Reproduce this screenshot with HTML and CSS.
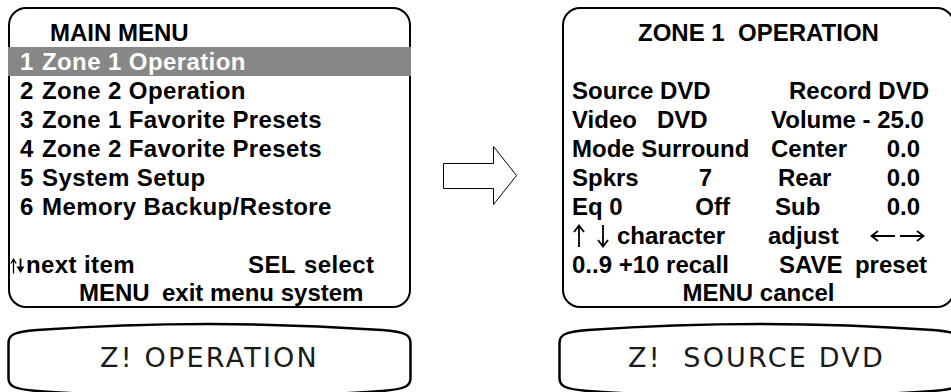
FILE: index.html
```html
<!DOCTYPE html>
<html lang="en">
<head>
<meta charset="UTF-8">
<meta name="viewport" content="width=device-width, initial-scale=1.0">
<title>Main Menu / Zone 1 Operation</title>
<link rel="stylesheet" href="styles.css">
</head>
<body>

<div class="stage">

    <section class="col col-left">
        <div class="panel panel-menu">
            <div class="title-menu">MAIN MENU</div>
            <div class="item sel"><span class="num">1</span>Zone 1 Operation</div>
            <div class="item"><span class="num">2</span>Zone 2 Operation</div>
            <div class="item"><span class="num">3</span>Zone 1 Favorite Presets</div>
            <div class="item"><span class="num">4</span>Zone 2 Favorite Presets</div>
            <div class="item"><span class="num">5</span>System Setup</div>
            <div class="item"><span class="num">6</span>Memory Backup/Restore</div>
            <div class="blank"></div>
            <div class="foot-nav">
                <span class="nav">
                    <svg class="updown" width="15" height="16" viewBox="0 0 15 16">
                        <path d="M3.5 15.5V2M0.8 5.5L3.5 1.2L6.2 5.5" fill="none" stroke="#000" stroke-width="1.3"/>
                        <path d="M10.5 0.5V10" stroke="#000" stroke-width="1.8"/>
                        <path d="M6.5 8.5H14.5L10.5 15Z" fill="#000"/>
                    </svg>next item</span>
                <span>SEL</span>
                <span>select</span>
            </div>
            <div class="foot-exit"><span class="key">MENU</span>exit menu system</div>
        </div>
        <div class="oval">
            <svg class="oval-shape" width="405" height="80" viewBox="0 0 405 80">
                <path d="M1.5 21C1.5 13 6 10 30 8Q202.5 -4 375 8C399 10 403.5 13 403.5 21L403.5 56C403.5 64 399 67 375 69Q202.5 81 30 69C6 67 1.5 64 1.5 56Z" fill="none" stroke="#000" stroke-width="2.5"/>
            </svg>
            <span class="oval-text">Z! OPERATION</span>
        </div>
    </section>

    <div class="pointer">
        <svg width="76" height="62" viewBox="0 0 76 62">
            <path d="M0.5 17.5H50.5V0.5L73.5 29.5L50.5 58.5V42.5H0.5Z" fill="#fff" stroke="#000" stroke-width="1"/>
        </svg>
    </div>

    <section class="col col-right">
        <div class="panel panel-zone">
            <div class="title-zone pre">ZONE 1  OPERATION</div>
            <div class="blank"></div>
            <div class="kv">
                <div class="half"><span>Source DVD</span></div>
                <div class="half half-end"><span>Record DVD</span></div>
            </div>
            <div class="kv">
                <div class="half"><span class="pre">Video   DVD</span></div>
                <div class="half in-3"><span>Volume - 25.0</span></div>
            </div>
            <div class="kv">
                <div class="half"><span>Mode Surround</span></div>
                <div class="half in-3 out-9"><span>Center</span><span>0.0</span></div>
            </div>
            <div class="kv">
                <div class="half spk"><span>Spkrs</span><span>7</span></div>
                <div class="half in-10 out-9"><span>Rear</span><span>0.0</span></div>
            </div>
            <div class="kv">
                <div class="half eq"><span>Eq 0</span><span>Off</span></div>
                <div class="half in-7 out-9"><span>Sub</span><span>0.0</span></div>
            </div>
            <div class="kv">
                <div class="half">
                    <span class="keys">
                        <svg class="vert" width="12" height="24" viewBox="0 0 12 24"><path d="M6 23V1.5M1 8L6 1.5L11 8" fill="none" stroke="#000" stroke-width="1.8"/></svg>
                        <svg class="vert" width="12" height="24" viewBox="0 0 12 24"><path d="M6 1V22.5M1 16L6 22.5L11 16" fill="none" stroke="#000" stroke-width="1.8"/></svg>
                        <span>character</span>
                    </span>
                </div>
                <div class="half out-4">
                    <span>adjust</span>
                    <span class="keys horiz">
                        <svg width="26" height="14" viewBox="0 0 26 14"><path d="M25 7H1.5M8 2L1.5 7L8 12" fill="none" stroke="#000" stroke-width="1.8"/></svg>
                        <svg width="26" height="14" viewBox="0 0 26 14"><path d="M1 7H24.5M18 2L24.5 7L18 12" fill="none" stroke="#000" stroke-width="1.8"/></svg>
                    </span>
                </div>
            </div>
            <div class="kv">
                <div class="half"><span>0..9 +10 recall</span></div>
                <div class="half in-11 out-2"><span>SAVE</span><span>preset</span></div>
            </div>
            <div class="title-zone last">MENU cancel</div>
        </div>
        <div class="oval oval-right">
            <svg class="oval-shape" width="405" height="80" viewBox="0 0 405 80">
                <path d="M1.5 21C1.5 13 6 10 30 8Q202.5 -4 375 8C399 10 403.5 13 403.5 21L403.5 56C403.5 64 399 67 375 69Q202.5 81 30 69C6 67 1.5 64 1.5 56Z" fill="none" stroke="#000" stroke-width="2.5"/>
            </svg>
            <span class="oval-text">Z!  SOURCE DVD</span>
        </div>
    </section>

</div>

</body>
</html>
```

FILE: styles.css
```css
html, body {
    margin: 0;
}
body {
    width: 951px;
    height: 392px;
    overflow: hidden;
    background: #fff;
    color: #000;
    font-family: "Liberation Sans", Arial, sans-serif;
    font-weight: bold;
    font-size: 24px;
}
.pre {
    white-space: pre;
}
.stage {
    display: flex;
    align-items: flex-start;
    padding: 7px 0 0 7px;
}
.col {
    display: flex;
    flex-direction: column;
    flex: none;
    width: 405px;
}

/* rounded screen panels */
.panel {
    box-sizing: border-box;
    border: 2px solid #000;
    border-radius: 18px;
    line-height: 29px;
    white-space: nowrap;
}
.panel-menu {
    width: 403px;
    margin: 0 1px;
    padding: 9px 0 0 10px;
}
.title-menu {
    padding-left: 30px;
}
.item {
    letter-spacing: 0.4px;
}
.item .num {
    display: inline-block;
    width: 22px;
}
.item.sel {
    background: #878787;
    color: #fff;
    margin: 0 -2px 0 -12px;
    padding-left: 12px;
}
.blank {
    height: 29px;
}
.foot-nav {
    display: grid;
    grid-template-columns: 238px 56px auto;
    margin-left: -10px;
    letter-spacing: 0.4px;
}
.nav {
    display: flex;
    align-items: center;
    gap: 1px;
}
.updown {
    display: block;
    margin-top: 2px;
}
.foot-exit {
    padding-left: 59px;
    line-height: 27px;
}
.foot-exit .key {
    display: inline-block;
    width: 83px;
}

.panel-zone {
    width: 393px;
    margin-left: 4px;
    padding: 9px 24px 0 8px;
}
.title-zone {
    text-align: center;
    margin: 0 -24px 0 -8px;
}
.title-zone.last {
    line-height: 27px;
}
.kv {
    display: grid;
    grid-template-columns: 196px 161px;
}
.half {
    display: flex;
    align-items: center;
    justify-content: space-between;
}
.half-end {
    justify-content: flex-end;
}
.spk { padding-right: 56px; }
.eq { padding-right: 38px; }
.in-3 { padding-left: 3px; }
.in-7 { padding-left: 7px; }
.in-10 { padding-left: 10px; }
.in-11 { padding-left: 11px; }
.out-2 { padding-right: 2px; }
.out-4 { padding-right: 4px; }
.out-9 { padding-right: 9px; }

/* arrow key glyphs */
.keys {
    display: flex;
    align-items: center;
    gap: 12px;
    padding-left: 1px;
}
.keys svg {
    display: block;
}
.keys .vert + span {
    margin-left: -4px;
}
.keys.horiz {
    gap: 3px;
    padding-left: 0;
}

/* arrow between the two screens */
.pointer {
    flex: none;
    width: 146px;
    padding-top: 139px;
}
.pointer svg {
    display: block;
    margin-left: 31px;
}

/* barrel shaped display strip */
.oval {
    position: relative;
    height: 70px;
    margin-top: 14px;
    display: flex;
    align-items: center;
    justify-content: center;
}
.oval-shape {
    position: absolute;
    left: 0;
    top: 0;
}
.oval-text {
    position: relative;
    font-family: "DejaVu Sans", sans-serif;
    font-weight: normal;
    font-size: 27px;
    letter-spacing: 2.2px;
    white-space: pre;
    color: #1a1a1a;
}
.oval-right .oval-text {
    margin-right: 8px;
}
```
